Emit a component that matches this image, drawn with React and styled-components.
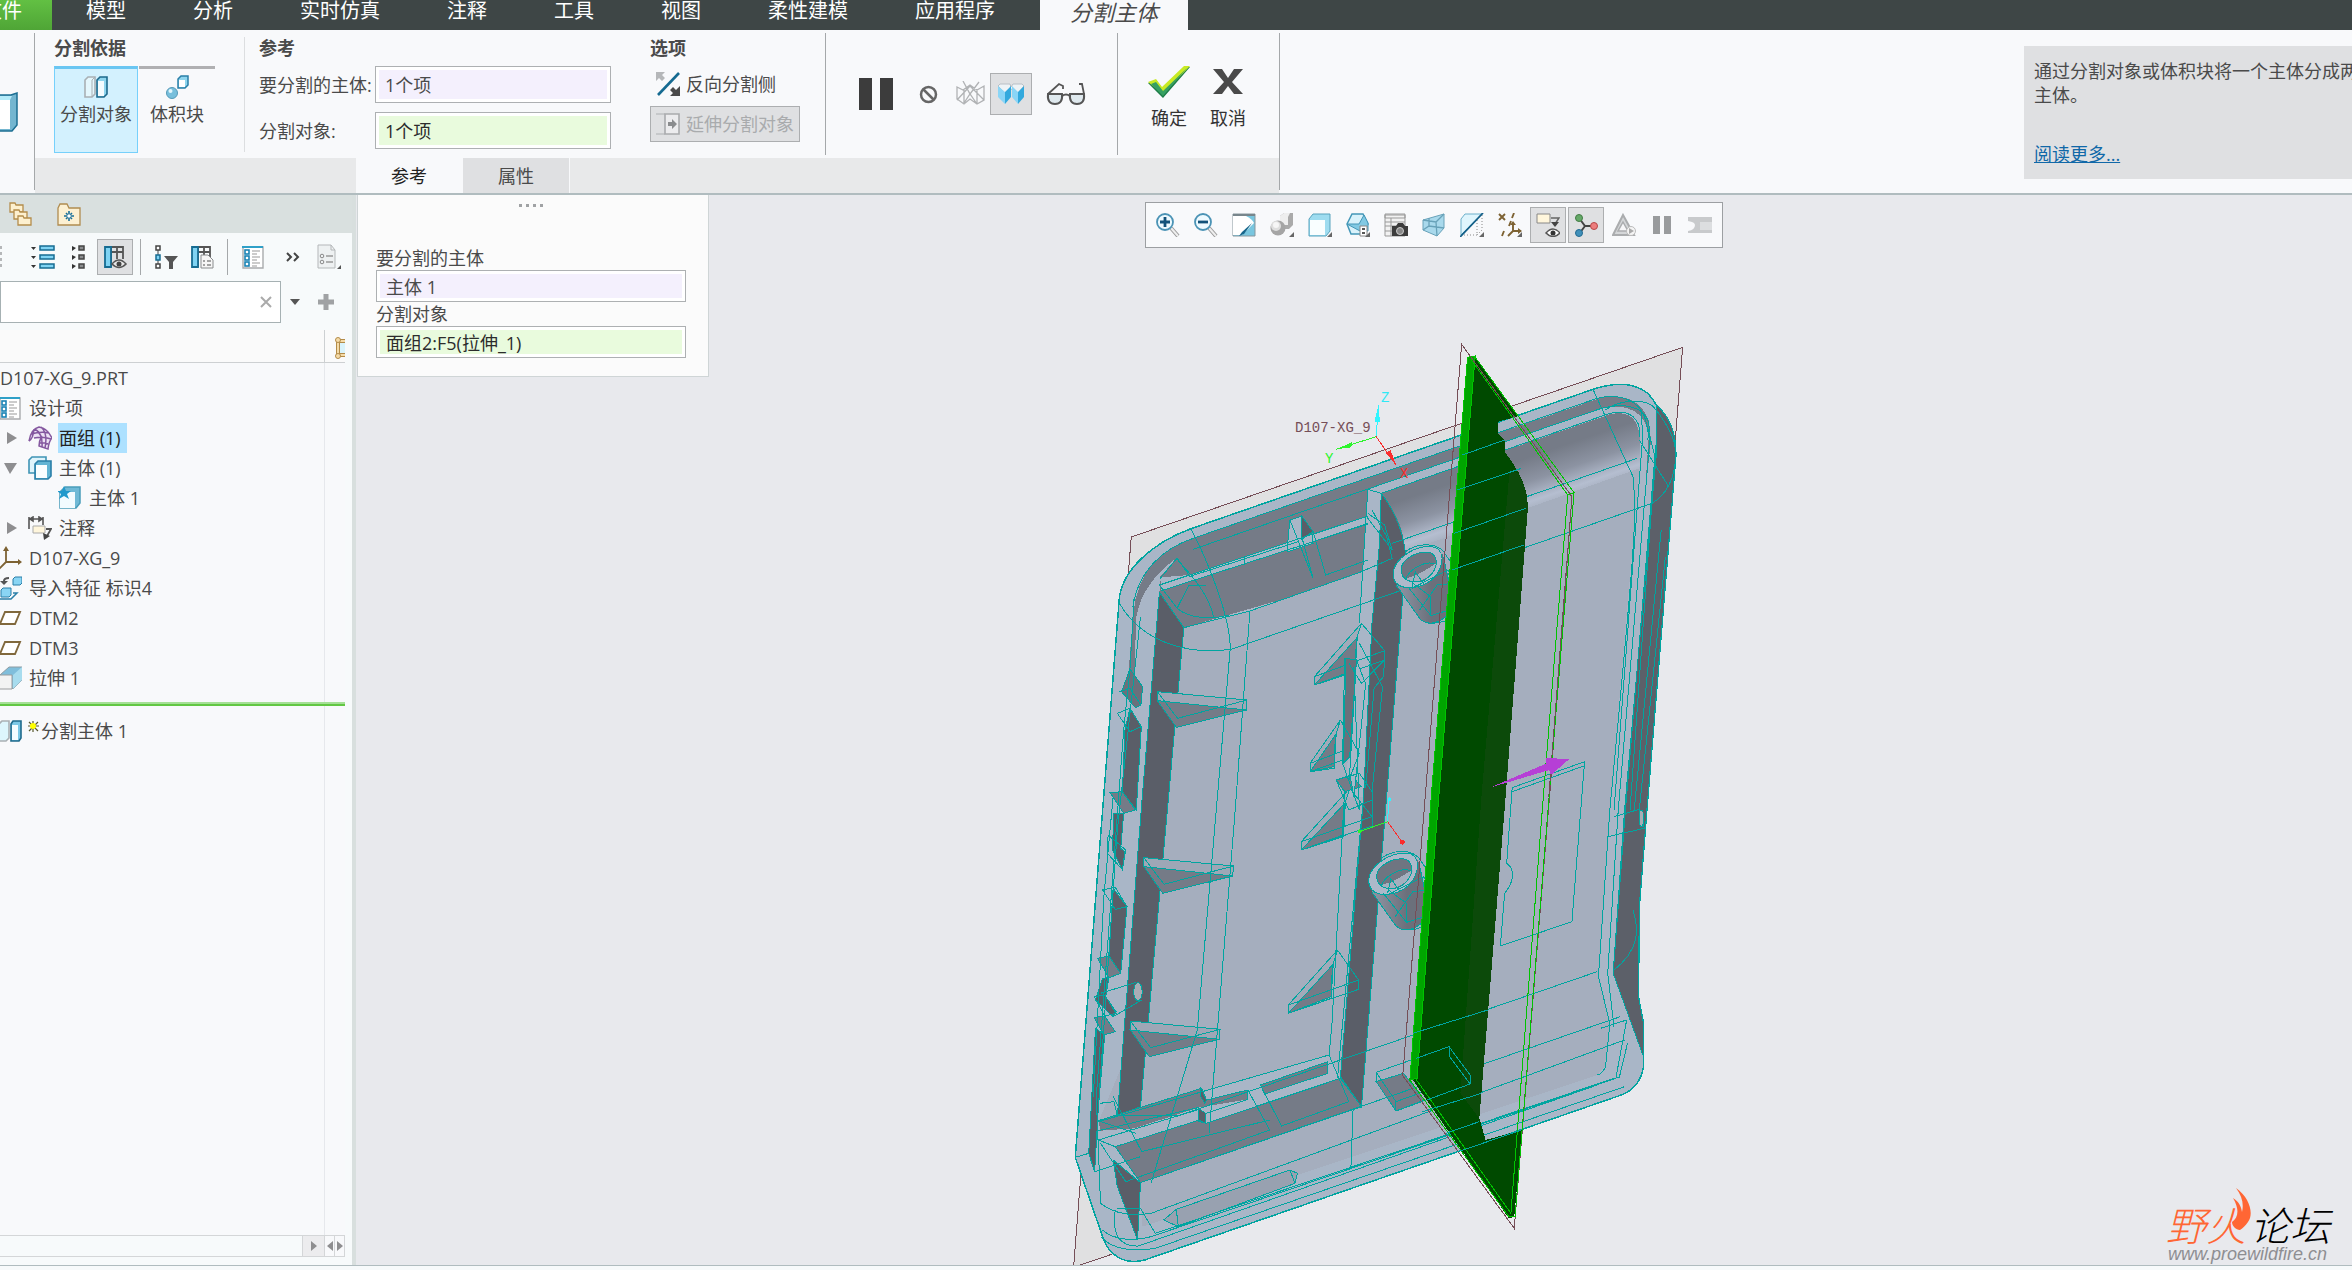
import React from 'react';
import styled, {createGlobalStyle, css} from 'styled-components';

const GlobalStyle = createGlobalStyle`
*
{
    margin: 0;
    padding: 0;
    box-sizing: border-box;
}

body
{
    font-family: 'Open Sans', 'Noto Sans CJK SC', sans-serif;
    font-size: 18px;
    line-height: 24px;
    color: #4a4a4a;
    background: #f8f9fb;
    overflow: hidden;
}

button, input
{
    font: inherit;
    color: inherit;
    border: none;
    background: none;
}

svg
{
    display: block;
    flex: none;
}
`;

const Page = styled.div`
	height: 100vh;
	display: flex;
	flex-direction: column;
`;

/* ---------- menu bar ---------- */

const MenuBar = styled.nav`
	flex: none;
	height: 30px;
	display: flex;
	gap: 1px;
	background: #3e4646;
	overflow: hidden;
`;

const MenuTab = styled.button`
	flex: none;
	height: 30px;
	padding: 0 33px 8px;
	font-size: 20px;
	line-height: 22px;
	color: #fff;
	white-space: nowrap;

	${({$file}) =>
		$file &&
		css`
			width: 52px;
			padding: 0 30px 8px 0;
			display: flex;
			justify-content: flex-end;
			background: linear-gradient(#62c043, #4fa536);
		`}

	${({$active}) =>
		$active &&
		css`
			margin-left: 11px;
			padding: 0 30px 6px;
			font-size: 22px;
			line-height: 24px;
			font-style: italic;
			color: #4a4a4a;
			background: #f8f9fb;
		`}
`;

/* ---------- ribbon ---------- */

const Ribbon = styled.header`
	flex: none;
	height: 165px;
	display: flex;
	background: #f8f9fb;
	border-bottom: 2px solid #b0bcbf;
`;

const RibbonStub = styled.div`
	width: 34px;
	padding-top: 62px;
	overflow: hidden;
`;

const Divider = styled.div`
	flex: none;
	width: 1px;
	margin: ${({$inset}) => $inset || '3px 0'};
	background: ${({$soft}) => ($soft ? '#dcdee0' : '#a5a8aa')};
`;

const Dashboard = styled.section`
	width: 1244px;
	flex: none;
	display: flex;
	flex-direction: column;
`;

const Groups = styled.div`
	height: 128px;
	display: flex;
`;

const Group = styled.div`
	padding: 6px ${({$right}) => $right}px 0 ${({$left}) => $left}px;
	display: flex;
	flex-direction: column;
	gap: 6px;
`;

const GroupTitle = styled.h2`
	font-size: 18px;
	line-height: 24px;
	font-weight: 700;
`;

const Choices = styled.div`
	display: flex;
	gap: 1px;
`;

const Choice = styled.button`
	width: ${({$on}) => ($on ? 84 : 76)}px;
	height: 87px;
	padding-top: 6px;
	display: flex;
	flex-direction: column;
	align-items: center;
	gap: 3px;
	white-space: nowrap;
	border-top: 3px solid #b0b0b2;

	${({$on}) =>
		$on &&
		css`
			border: 1px solid #76d0fb;
			border-top: 3px solid #6ac6f2;
			background: #d3f1fe;
		`}
`;

const Fields = styled.div`
	display: grid;
	grid-template-columns: 116px 236px;
	grid-auto-rows: 37px;
	row-gap: 9px;
	align-items: center;
`;

const Collector = styled.input`
	width: 100%;
	height: ${({$h}) => $h || 37}px;
	padding: 0 9px 1px;
	border: 1px solid #adb0b2;
	box-shadow: inset 0 0 0 3px #fff;
	background: ${({$green}) => ($green ? '#e9fbdd' : '#f4f0fd')};
	color: ${({$green}) => ($green ? '#2c2c2c' : '#4a4a4a')};
	outline: none;
`;

const OptionButton = styled.button`
	width: 150px;
	height: 36px;
	padding-left: 5px;
	display: flex;
	align-items: center;
	gap: 6px;
	white-space: nowrap;
	border: 1px solid transparent;

	&:disabled {
		color: #a9abad;
		background: #dfe0e2;
		border-color: #acaeb0;
	}
`;

const Options = styled.div`
	display: flex;
	flex-direction: column;
	gap: 4px;
`;

const Playback = styled.div`
	padding: 0 24px 0 27px;
	display: flex;
	align-items: center;
	gap: 7px;
`;

const PlayButton = styled.button`
	width: ${({$w}) => $w}px;
	height: 42px;
	display: flex;
	align-items: center;
	justify-content: center;
	border: 1px solid ${({$on}) => ($on ? '#acaeb0' : 'transparent')};
	background: ${({$on}) => ($on ? '#dfe0e2' : 'none')};
`;

const Finish = styled.div`
	padding: 36px 22px 0 23px;
	display: flex;
	gap: 3px;
`;

const FinishButton = styled.button`
	width: 56px;
	height: 64px;
	display: flex;
	flex-direction: column;
	align-items: center;
	justify-content: space-between;
	color: #333;
`;

const SubTabs = styled.div`
	height: 35px;
	padding-left: 321px;
	display: flex;
	background: #e8e9ea;
`;

const SubTab = styled.button`
	width: 107px;
	border-right: 1px solid #f8f9fb;
	background: ${({$on}) => ($on ? '#f8f9fb' : '#dfe0e2')};
	color: ${({$on}) => ($on ? '#222' : '#4a4a4a')};
`;

const Help = styled.aside`
	width: 328px;
	height: 133px;
	margin: 16px 0 0 auto;
	padding: 13px 0 0 10px;
	overflow: hidden;
	background: #dfe0e2;

	p {
		width: 350px;
		margin-bottom: 35px;
	}

	a {
		color: #1068a8;
	}
`;

/* ---------- model tree ---------- */

const Workspace = styled.main`
	flex: 1;
	min-height: 0;
	display: flex;
`;

const Sidebar = styled.aside`
	flex: none;
	width: 356px;
	display: flex;
	flex-direction: column;
	background: #f7fafb;
	border-right: 4px solid #d8dfde;
`;

const PaneTabs = styled.div`
	height: 38px;
	padding-left: 9px;
	display: flex;
	align-items: center;
	gap: 24px;
	background: #d9e0df;
`;

const PaneTab = styled.button`
	width: 24px;
	height: 24px;
`;

const TreeTools = styled.div`
	height: 48px;
	padding-right: 5px;
	display: flex;
	align-items: center;

	> ${Divider} {
		height: 36px;
	}

	> :nth-last-child(2) {
		margin-left: auto;
	}
`;

const ToolStub = styled.div`
	width: 25px;
`;

const ToolButton = styled.button`
	flex: none;
	width: 36px;
	height: 36px;
	display: flex;
	align-items: center;
	justify-content: center;
	border: 1px solid ${({$on}) => ($on ? '#acaeb0' : 'transparent')};
	background: ${({$on}) => ($on ? '#dfe0e2' : 'none')};
`;

const SearchRow = styled.div`
	height: 42px;
	margin-bottom: 7px;
	display: flex;
	align-items: center;
`;

const SearchBox = styled.div`
	width: 281px;
	height: 42px;
	display: flex;
	border: 1px solid #a6b1b3;
	background: #fff;

	input {
		flex: 1;
		min-width: 0;
		padding-left: 8px;
		outline: none;
	}
`;

const SmallButton = styled.button`
	width: ${({$w}) => $w}px;
	height: 40px;
	display: flex;
	align-items: center;
	justify-content: center;
`;

const ColumnHead = styled.div`
	width: 345px;
	height: 33px;
	display: flex;
	background: #fafafa;
	border-bottom: 1px solid #cdd0d2;

	div {
		width: 325px;
		border-right: 1px solid #cdd0d2;
	}

	svg {
		margin: 6px 0 0 10px;
	}
`;

const Tree = styled.div`
	flex: 1;
	width: 345px;
	background: #f8f9fb;
`;

const TreeList = styled.ul`
	width: 325px;
	height: 100%;
	list-style: none;
	border-right: 1px solid #e6e8ec;
`;

const TreeRow = styled.li`
	height: 30px;
	padding-left: ${({$indent}) => $indent || 0}px;
	display: flex;
	align-items: center;
	white-space: nowrap;
`;

const Toggle = styled.button`
	width: 28px;
	height: 30px;
	padding-left: 4px;
`;

const TreeLabel = styled.span`
	height: 30px;
	line-height: 30px;
	margin-left: ${({$tight}) => ($tight ? 1 : 6)}px;
	padding: 0 6px 0 1px;
	background: ${({$selected}) => ($selected ? '#ade1ff' : 'none')};
	color: ${({$selected}) => ($selected ? '#222' : 'inherit')};
`;

const InsertHere = styled.li`
	width: 345px;
	height: 4px;
	margin: 9px 0 10px;
	background: #62c743;
	border-top: 2px solid #a5e096;
`;

const ScrollBar = styled.div`
	width: 345px;
	height: 22px;
	margin-bottom: 8px;
	display: flex;
	justify-content: flex-end;
	border: 1px solid #d4d6d8;
	border-left: none;
`;

const ScrollButton = styled.button`
	width: ${({$w}) => $w}px;
	display: flex;
	align-items: center;
	justify-content: center;
	border-left: 1px solid #d4d6d8;
	background: ${({$w}) => ($w > 12 ? '#ececee' : '#f8f9fb')};
`;

/* ---------- graphics area ---------- */

const Viewport = styled.section`
	position: relative;
	flex: 1;
	overflow: hidden;
	background: #e8e9ed;
`;

const Scene = styled.svg`
	position: absolute;
	inset: 0;
	width: 100%;
	height: 100%;

	path,
	ellipse {
		vector-effect: non-scaling-stroke;
	}

	text {
		font: 14px 'Liberation Mono', monospace;
	}
`;

const FloatPanel = styled.section`
	position: absolute;
	left: 1px;
	top: -1px;
	width: 352px;
	padding: 9px 22px 18px 18px;
	background: #fbfbfb;
	border: 1px solid #cfd5d6;
`;

const Grip = styled.div`
	height: 42px;
	display: flex;
	justify-content: center;
	gap: 4px;

	i {
		width: 3px;
		height: 3px;
		background: #a0a2a4;
	}
`;

const FieldLabel = styled.label`
	display: block;
	height: 24px;
`;

const ViewTools = styled.div`
	position: absolute;
	left: 789px;
	top: 7px;
	height: 46px;
	padding: 0 4px;
	display: flex;
	align-items: center;
	gap: 2px;
	border: 1px solid #9c9fa2;
	background: #f8f9fb;
`;

const Brand = styled.div`
	position: absolute;
	right: 16px;
	bottom: 3px;
	width: 170px;
	color: #000;

	p {
		display: flex;
		gap: 4px;
		font: italic 300 40px/44px 'Noto Sans CJK SC', sans-serif;
		white-space: nowrap;
	}

	span {
		color: #ff6634;
	}

	small {
		display: block;
		padding-left: 2px;
		font: italic 18px/16px 'Liberation Sans', sans-serif;
		color: #8e8e92;
	}

	svg {
		position: absolute;
		left: 65px;
		top: -14px;
	}
`;

const StatusLine = styled.footer`
	flex: none;
	height: 5px;
	border-top: 1px solid #b0bcbf;
	background: #f7fafb;
`;

/* ---------- icons ---------- */

const blue = '#2a7fa8';

function Icon({w = 24, h = 24, box, children}) {
	return (
		<svg width={w} height={h} viewBox={box || `0 0 ${w} ${h}`} fill='none' aria-hidden='true'>
			{children}
		</svg>
	);
}

const Corner = () => <path d='M24 19v5h-5z' fill='#666' />;

const SplitIcon = () => (
	<Icon>
		<path d='M1 5l3-3h7v17l-3 3H1z' fill='#e4f7fd' stroke='#a9b0b4' strokeWidth='1.6' />
		<path d='M8 22V5l3-3' stroke='#a9b0b4' />
		<path d='M13 5l3-3h7v17l-3 3h-7z' fill='#8fd5ee' stroke='#1e6a8c' strokeWidth='1.6' />
		<path d='M14 6h6v15h-6z' fill='#f4fcff' />
	</Icon>
);

const VolumeIcon = () => (
	<Icon>
		<path d='M13 4l3-3h7v9l-3 3h-7z' fill='#8fd5ee' stroke={blue} strokeWidth='1.5' />
		<path d='M14 5h6v7h-6z' fill='#fff' />
		<circle cx='7' cy='18' r='5.5' fill='#78bfdc' stroke='#559ab8' />
		<circle cx='5.5' cy='16' r='2' fill='#e2f6fd' />
	</Icon>
);

const FlipIcon = () => (
	<Icon>
		<path d='M23 1L2 23' stroke='#156a91' strokeWidth='2.6' />
		<path d='M0 0h9L6 3l3 3-3 3-3-3-3 3z' fill='#b5b7b9' />
		<path d='M24 24H14l3-3-3-3 3-3 3 3 4-4z' fill='#4a4a4a' />
	</Icon>
);

const ExtendIcon = () => (
	<Icon>
		<path d='M0 2h9M0 22h9' stroke='#c6c8ca' strokeWidth='2' />
		<path d='M9 2h14v20H9z' fill='#ececee' stroke='#a9abad' strokeWidth='1.6' />
		<path d='M12 10h4V7l5 5-5 5v-3h-4z' fill='#8a8c8e' />
	</Icon>
);

const WireIcon = () => (
	<Icon w={29} h={26}>
		<path
			d='M1 6l6 3 7-5 7 5 7-4v14l-7 4-7-5-6 5-7-5zM8 9v13M21 9v14M1 19L14 5l14 14M7 0l7 13L23 1M8 22l6-9 7 10'
			stroke='#b0b2b4'
			strokeWidth='1.3'
		/>
	</Icon>
);

const SolidIcon = () => (
	<Icon w={28} h={22}>
		<path d='M1 3l2-2h10l1 3 2-3h9l2 2-6 7-7-4-6 4z' fill='#eef3f6' stroke='#b9c0c6' />
		<path d='M1 3l7 6v12l-7-7zM15 3l6 6v12l-6-7z' fill='#8ad5f6' />
		<path d='M8 9l6-6v11l-6 7zM21 9l6-6v11l-6 7z' fill='#33a9dd' />
	</Icon>
);

const GlassesIcon = () => (
	<Icon w={40} h={24}>
		<path d='M2 12h14q1 10-7 10-8 0-7-10zM24 12h14q1 10-7 10-8 0-7-10z' fill='#dfe9ee' stroke='#555' strokeWidth='2' />
		<path d='M16 14q4-3 8 0M2 12L13 2l4 2v3M38 12L36 2h-3' stroke='#555' strokeWidth='1.8' />
	</Icon>
);

const CheckIcon = () => (
	<Icon w={42} h={32}>
		<path d='M0 17l8-3 6 8L37 1h5L15 32z' fill='#1d7d48' />
		<path d='M0 16l8-3 6 8L36 0h6L15 28z' fill='#c8ea24' />
		<path d='M3 18l5-2 7 9L39 2 15 30z' fill='#36a062' />
	</Icon>
);

const CrossIcon = () => (
	<Icon w={30} h={32}>
		<path d='M0 3h9l6 9 6-9h9L19 16l11 12h-9l-6-8-6 8H0l11-12z' fill='#4a4a4a' />
	</Icon>
);

const FoldersIcon = () => (
	<Icon>
		{[0, 7, 13].map((y, i) => (
			<path
				key={y}
				d={`M${i * 4 + 1} ${y + 1}h5l1 2h7v7h-13z`}
				fill='#fdf0cf'
				stroke='#b48d4c'
				strokeWidth='1.3'
			/>
		))}
	</Icon>
);

const FavoriteIcon = () => (
	<Icon>
		<path d='M1 6l2-4h7l2 4h11v17H1z' fill='#fcf0d2' stroke='#b08c50' strokeWidth='1.3' />
		<path d='M12 9v10M7 14h10M9 11l6 6M15 11l-6 6' stroke='#1a6f99' strokeWidth='1.6' />
		<circle cx='12' cy='14' r='1.8' fill='#fff' />
	</Icon>
);

const ExpandIcon = () => (
	<Icon>
		{[1, 10, 19].map((y) => (
			<React.Fragment key={y}>
				<path d={`M0 ${y + 1}h5l-2.500 3z`} fill='#333' />
				<path d={`M9 ${y}h14v4H9z`} fill='#7fd3f3' stroke='#176c92' strokeWidth='1.5' />
			</React.Fragment>
		))}
	</Icon>
);

const CollapseIcon = () => (
	<Icon>
		{[1, 10, 19].map((y) => (
			<React.Fragment key={y}>
				<path d={`M5 ${y}l4 2-4 3z`} fill='#333' />
				<path d={`M12 ${y}h5v4h-5z`} fill='#8b8d8f' stroke='#444' strokeWidth='1.5' />
			</React.Fragment>
		))}
	</Icon>
);

const ColumnsIcon = ({page}) => (
	<Icon>
		<path d='M2 2h18v12M2 7h18M8 2v20M14 2v12' stroke='#555' strokeWidth='1.8' />
		<path d='M2 2h6v20H2z' fill='#7fd3f3' stroke='#176c92' strokeWidth='1.8' />
		{page ? (
			<>
				<path d='M11 10h7l5 5v8H11z' fill='#f6f6f6' stroke='#8a8c8e' />
				<path d='M13 16h2m2 0h4m-8 4h2m2 0h4' stroke='#888' strokeWidth='1.5' />
			</>
		) : (
			<>
				<path d='M9 19q7-8 14 0-7 7-14 0z' fill='#e8e8e8' stroke='#555' strokeWidth='1.6' />
				<circle cx='16' cy='19' r='2.5' fill='#444' />
			</>
		)}
	</Icon>
);

const FilterIcon = () => (
	<Icon>
		<path d='M4 4v17' stroke='#444' />
		<path d='M2 1h4v4H2zM2 19h4v4H2z' fill='#fff' stroke='#444' strokeWidth='1.5' />
		<path d='M2 10h4v5H2z' fill='#7fd3f3' stroke='#176c92' strokeWidth='1.5' />
		<path d='M10 11h14l-5 6v7h-4v-7z' fill='#555' />
	</Icon>
);

const ListIcon = () => (
	<Icon>
		<path d='M2 2h20v21H2z' fill='#fff' stroke='#a9abad' strokeWidth='1.4' />
		<path d='M1 1h21v2H1z' fill='#2fa0c8' />
		{[6, 12, 18].map((y) => (
			<React.Fragment key={y}>
				<rect x='4' y={y - 1} width='4' height='4' stroke='#1a83b4' strokeWidth='1.6' />
				<path d={`M11 ${y}h8M11 ${y + 3}h5`} stroke='#999' />
			</React.Fragment>
		))}
	</Icon>
);

const SettingsIcon = () => (
	<Icon w={26} h={26}>
		<path d='M2 1h13l4 5v18H2z' fill='#eef1f2' stroke='#b4b7b9' />
		<path d='M15 1v5h4' stroke='#b4b7b9' />
		<path d='M10 12h7M10 18h7' stroke='#999' strokeWidth='1.5' />
		<circle cx='6' cy='12' r='1.8' stroke='#888' />
		<circle cx='6' cy='18' r='1.8' stroke='#888' />
		<path d='M25 21v4h-4z' fill='#555' />
	</Icon>
);

const DotsIcon = () => (
	<Icon w={3}>
		<path d='M0 1h2v3H0zM0 7h2v3H0zM0 13h2v3H0zM0 19h2v3H0z' fill='#b5b7b9' />
	</Icon>
);

const QuiltIcon = () => (
	<Icon>
		<path d='M1 15Q3 3 11 1l9 3q3 4 4 8l-5 11-8-2 1-7-6-3z' fill='#ece2f4' />
		<path
			d='M1 15Q3 3 11 1q8 1 13 11-3 3-4 11l-9-3q0-5 3-10M3 8q10-3 18-1M6 12q9-2 17 1M11 17q5-1 9 1M7 3q8 5 7 18M13 1q7 6 4 21M1 15q4-2 5-12'
			stroke='#84589f'
			strokeWidth='1.5'
		/>
	</Icon>
);

const BodiesIcon = () => (
	<Icon>
		<path d='M1 4l3-3h14v13l-3 3H1z' fill='#dff4fb' stroke='#3f94b5' strokeWidth='1.6' />
		<path d='M7 8l3-3h13v15l-3 3H7z' fill='#62b4d3' stroke={blue} strokeWidth='1.6' />
		<path d='M8 9h11v13H8z' fill='#fafeff' />
	</Icon>
);

const BodyIcon = () => (
	<Icon>
		<path d='M2 6l5-5h15v16l-4 5H2z' fill='#6fb9d6' stroke='#4a9dbb' strokeWidth='1.5' />
		<path d='M2 6h15v16H2z' fill='#f2fbff' />
		<path d='M6 0l2 5h5L9 8l2 5-5-3-5 3 2-5-4-3h5z' fill='#2199cc' />
	</Icon>
);

const NoteIcon = () => (
	<Icon>
		<path d='M1 13V1M15 9V1M2 3h12M2 3l3-2v4zM14 3l-3-2v4z' stroke='#555' strokeWidth='1.6' />
		<path d='M5 10h12v7H5z' fill='#fff6dc' stroke='#aaa' />
		<path d='M18 13h5l-4 7' stroke='#555' strokeWidth='1.8' />
		<path d='M15 17l7 3-6 4z' fill='#444' />
	</Icon>
);

const CsysIcon = () => (
	<Icon w={22}>
		<path d='M6 2v14h14M6 16l-7 7' stroke='#7d6233' strokeWidth='1.8' />
		<path d='M3 5l3-5 3 5zM18 13l4 3-4 3z' fill='#7d6233' />
	</Icon>
);

const ImportIcon = () => (
	<Icon w={22}>
		<path d='M13 3l2-2h7v6l-2 2h-7z' fill='#8ad5f4' stroke={blue} />
		<path d='M1 14l2-2h8v7l-2 2H1z' fill='#8ad5f4' stroke={blue} />
		<path d='M0 23h11l6-6h-4' stroke={blue} strokeWidth='1.5' />
		<path d='M9 1q-6 0-6 4H0l4 4 4-4H5q0-2 4-2z' fill='#555' />
	</Icon>
);

const PlaneIcon = () => (
	<Icon w={22}>
		<path d='M5 6h15l-5 12H0z' fill='#fff' stroke='#80683c' strokeWidth='1.9' />
	</Icon>
);

const ExtrudeIcon = () => (
	<Icon w={22}>
		<path d='M0 9L9 1h13v13l-9 9z' fill='#80bedb' stroke='#8e9ba2' />
		<path d='M13 9l9-8v13l-9 9z' fill='#a8dcee' />
		<path d='M-1 9h13v14H-1z' fill='#f3f3f3' stroke='#9a9c9e' />
	</Icon>
);

const HalfSplitIcon = () => (
	<Icon w={22}>
		<path d='M-1 5l3-3h7v17l-3 3h-7z' fill='#ddf6fd' stroke='#a9b0b4' strokeWidth='1.6' />
		<path d='M11 5l2-3h8v17l-2 3h-8z' fill='#7cc8e6' stroke='#1e6a8c' strokeWidth='1.6' />
		<path d='M12 6h6v15h-6z' fill='#f4fcff' />
	</Icon>
);

const PendingIcon = () => (
	<Icon w={11} h={24}>
		<path d='M5 2v11M0 7h11M1 3l9 9M10 3l-9 9' stroke='#57572c' strokeWidth='1.2' />
		<circle cx='5' cy='7' r='3' fill='#ff0' />
	</Icon>
);

const FrameIcon = () => (
	<Icon w={10}>
		<path d='M5 7h5v10H5z' fill='#d9f3fb' />
		<path d='M3 4v16M3 5h8M3 19h8' stroke='#b38b48' strokeWidth='4' />
		<path d='M3 4v16M3 5h8M3 19h8' stroke='#f5dba8' strokeWidth='2' />
		<circle cx='3' cy='4' r='2.5' fill='#f5dba8' stroke='#b38b48' />
		<circle cx='3' cy='20' r='2.5' fill='#f5dba8' stroke='#b38b48' />
	</Icon>
);

const Triangle = ({d, w = 14, h = 14}) => (
	<Icon w={w} h={h}>
		<path d={d} fill='#8e8e90' />
	</Icon>
);

const ZoomIcon = ({plus}) => (
	<Icon>
		<path d='M15 15l7 8' stroke='#999' strokeWidth='4' />
		<path d='M15 15l7 8' stroke='#eee' strokeWidth='2' />
		<circle cx='9' cy='9' r='8' fill='#eefaff' stroke='#4b93b5' strokeWidth='1.8' />
		<path d={plus ? 'M4 9h10M9 4v10' : 'M4 9h10'} stroke='#12527a' strokeWidth='2.8' />
	</Icon>
);

const viewIcons = [
	{name: '放大', icon: <ZoomIcon plus />},
	{name: '缩小', icon: <ZoomIcon />},
	{
		name: '重画',
		icon: (
			<Icon>
				<path d='M1 1h22v22H1z' fill='#79c6df' stroke='#88979d' />
				<path d='M1 3h13q6 3 8 7L10 22H1z' fill='#fff' />
				<path d='M1 1h22v2H1z' fill='#78868c' />
				<path d='M20 10L10 19l-3 4 5-2z' fill='#17668c' />
			</Icon>
		),
	},
	{
		name: '渲染',
		icon: (
			<Icon>
				<path d='M10 3l4-3h9v12l-4 4h-9z' fill='#aaa' />
				<path d='M10 3l4-3h6l-2 4v8h-8z' fill='#eee' />
				<circle cx='8' cy='15' r='7.5' fill='#a5a5a5' />
				<circle cx='6' cy='13' r='5' fill='#dedede' />
				<circle cx='6' cy='12' r='3' fill='#f6f6f6' />
				<Corner />
			</Icon>
		),
	},
	{
		name: '显示样式',
		icon: (
			<Icon>
				<path d='M1 6l4-5h17v17l-4 5H1z' fill='#9edcf0' stroke='#58a3bd' />
				<path d='M2 7h15v15H2z' fill='#f9feff' />
				<Corner />
			</Icon>
		),
	},
	{
		name: '已保存方向',
		icon: (
			<Icon>
				<path d='M6 1h11l5 10-5 10H5L1 11z' fill='#d9f2fb' stroke='#4497b8' strokeWidth='1.5' />
				<path d='M1 11h12l5-9 4 8v8h-8z' fill='#82c9e3' stroke='#4497b8' />
				<path d='M14 13h7v10h-7z' fill='#fff' stroke='#888' />
				<path d='M16 16h3m-3 4h3' stroke='#555' strokeWidth='2' />
				<Corner />
			</Icon>
		),
	},
	{
		name: '视图管理器',
		icon: (
			<Icon>
				<path d='M1 1h20v22H1z' fill='#f2f2f2' stroke='#999' />
				<path d='M1 2h20v3H1zM1 9h20M1 13h20M1 18h20M7 5v18' stroke='#999' />
				<path d='M8 13h4l2-3h5l2 3h3v10H8z' fill='#3c3c3c' />
				<circle cx='16' cy='18' r='3.5' fill='#888' stroke='#ccc' />
			</Icon>
		),
	},
	{
		name: '透视图',
		icon: (
			<Icon>
				<path d='M1 7L22 1v14l-7 8L1 17z' fill='#a9d9ec' stroke='#68a2b9' />
				<path d='M1 7l13 2 8-8M14 9l1 14M1 17l6-4 15 2M7 5v8' stroke='#68a2b9' strokeWidth='1.3' />
			</Icon>
		),
	},
	{
		name: '截面',
		icon: (
			<Icon>
				<path d='M1 6l4-5h17L1 22z' fill='#dff5fd' stroke='#6cb0cb' />
				<path d='M17 7v15H3M22 2v15l-5 5' stroke='#888' strokeDasharray='1 2' />
				<path d='M23 0L0 24' stroke='#125f88' strokeWidth='1.8' />
				<Corner />
			</Icon>
		),
	},
	{
		name: '基准显示',
		icon: (
			<Icon>
				<path d='M1 1l6 6M7 1L1 7M16 0l-2 5M13 8l-2 5M6 18l-2 5M15 10v8h8M15 18l-5 5' stroke='#7d6233' strokeWidth='1.9' />
				<path d='M12 12l3-4 3 4zM20 15l4 3-4 3z' fill='#7d6233' />
				<Corner />
			</Icon>
		),
	},
	{
		name: '注释显示',
		on: true,
		icon: (
			<Icon>
				<path d='M1 1h13v9H1z' fill='#fff6dc' stroke='#888' />
				<path d='M15 5h8l-4 6' stroke='#666' strokeWidth='1.5' />
				<path d='M15 9h8l-4 5z' fill='#444' />
				<path d='M10 20q7-8 14 0-7 7-14 0z' fill='#fff' stroke='#555' strokeWidth='1.5' />
				<circle cx='17' cy='20' r='2.5' fill='#333' />
			</Icon>
		),
	},
	{
		name: '旋转中心',
		on: true,
		icon: (
			<Icon>
				<path d='M5 5l6 8h9M11 13l-6 8' stroke='#444' strokeWidth='2' />
				<circle cx='5' cy='5' r='3.5' fill='#65a968' stroke='#427b44' />
				<circle cx='20' cy='13' r='3.5' fill='#ed7d7d' stroke='#b54747' />
				<circle cx='5' cy='20' r='3.5' fill='#4090ba' stroke='#226a90' />
			</Icon>
		),
	},
	{
		name: '仿真',
		icon: (
			<Icon>
				<path d='M11 2l11 20H1z' fill='#d4d6d8' stroke='#aaacae' strokeWidth='2' />
				<path d='M11 9l5 9H6z' fill='#f6f6f8' stroke='#aaacae' strokeWidth='1.5' />
				<circle cx='19' cy='18' r='4.5' fill='#f4f4f4' stroke='#bbb' />
				<path d='M17 15l5 3-5 3z' fill='#aaa' />
			</Icon>
		),
	},
	{
		name: '暂停',
		icon: (
			<Icon>
				<path d='M3 3h7v18H3zM14 3h7v18h-7z' fill='#999b9d' />
			</Icon>
		),
	},
	{
		name: '流动',
		icon: (
			<Icon>
				<path d='M0 4h24v16H0v-2q7-1 7-6 0-3-7-4z' fill='#c8cacc' />
				<path d='M12 9h12v8H12z' fill='#dcdee0' />
			</Icon>
		),
	},
];

/* ---------- 3D model ---------- */

const leftRibs = [
	[0, 0],
	[-32, 498],
	[-64, 988],
];

const rightRibs = [
	{apex: [740, 880], tip: [628, 1040], base: [795, 962]},
	{apex: [690, 1170], tip: [618, 1300], base: [733, 1245]},
	{apex: [712, 1375], tip: [597, 1535], base: [765, 1460]},
	{apex: [683, 1860], tip: [566, 2025], base: [733, 1950]},
];

function Boss() {
	return (
		<>
			<path d='M822 765L880 868C905 895 950 870 962 815L932 670Z' fill='url(#boss)' />
			<path d='M815 730C818 685 870 640 915 652C945 670 930 735 895 760C860 782 815 780 815 730Z' fill='#adb9ca' />
			<path d='M834 720C834 690 870 660 905 668C930 690 915 730 890 750C860 765 835 750 834 720Z' fill='#6f7581' />
			<path d='M845 745C870 740 900 715 920 698C920 725 895 750 865 757C852 757 846 752 845 745Z' fill='#a5afbe' />
			<path
				d='M822 765L880 868C905 895 950 870 962 815M815 730C818 685 870 640 915 652C945 670 930 735 895 760C860 782 815 780 815 730ZM834 720C834 690 870 660 905 668C930 690 915 730 890 750C860 765 835 750 834 720ZM845 750C850 720 890 690 915 702M850 770L905 857L960 835L935 680M860 775L945 720L992 785C992 830 960 880 905 880M860 770L868 726L890 765M878 840L920 765L960 760M905 857L905 800L862 760M845 665C870 640 915 635 935 665L965 720'
				fill='none'
				stroke='#00a5a0'
			/>
		</>
	);
}

function Model() {
	return (
		<svg x='694' y='135' width='660' height='940' viewBox='0 0 1568 2820' preserveAspectRatio='none' shapeRendering='crispEdges'>
			<defs>
				<linearGradient id='fillet' gradientUnits='userSpaceOnUse' x1='787' y1='490' x2='862' y2='665'>
					<stop offset='0.2' stopColor='#757b87' />
					<stop offset='0.55' stopColor='#8c93a2' />
					<stop offset='0.85' stopColor='#b5bed0' />
					<stop offset='1' stopColor='#a5aebe' />
				</linearGradient>
				<linearGradient id='boss' x1='0' x2='1'>
					<stop offset='0.1' stopColor='#8a909e' />
					<stop offset='0.6' stopColor='#6b707b' />
				</linearGradient>
			</defs>

			{/* datum plane behind the housing */}
			<path d='M193 621L1503 52L1365 2245L56 2812Z' fill='#e0e0e1' stroke='#754e57' />

			{/* outer shell */}
			<path
				d='M165 800C175 720 240 640 335 596L1290 178C1370 145 1420 170 1440 225C1480 270 1486 320 1487 375L1418 1440L1400 1730L1398 2000L1410 2080L1410 2210C1405 2250 1390 2280 1355 2296L225 2790C180 2805 140 2780 125 2720L60 2482Z'
				fill='#a9b6c7'
				stroke='#00a5a0'
				strokeWidth='1.5'
			/>
			<path d='M1440 225C1480 270 1486 320 1487 375L1418 1440L1400 1730L1398 2000L1410 2080L1410 2180L1338 1930L1365 1440L1440 380Z' fill='#5c6069' stroke='#00a5a0' />

			{/* cavity: upper wall, then floors */}
			<path d='M197 860C205 720 270 655 340 625L1310 203C1370 190 1405 215 1422 270L1428 330L1395 700L845 690L740 740L318 893L260 787L262 740L300 685C250 730 215 790 205 860L200 1050L187 1020Z' fill='#757b87' />
			<path d='M262 745L302 684L330 735L755 558L755 582L265 782Z' fill='#a9b6c7' />
			<path d='M264 742L302 684L330 735Z' fill='#757b87' />
			<path d='M755 478L1310 235C1370 215 1425 250 1422 330L1360 1500L1330 1440L1398 320C1395 240 1340 245 1310 262L787 490Z' fill='#a9b6c7' />
			<path d='M787 490L1330 253C1395 235 1410 290 1400 420L845 690C845 600 820 540 787 490Z' fill='url(#fillet)' />
			<path d='M845 665L1400 415L1330 1440L1303 1930L1330 2080L1318 2210L1300 2235L220 2690L210 2560L740 2330Z' fill='#a5aebe' />
			<path d='M318 893L475 843L745 725L735 880L700 1000L745 1400L690 2240L663 2175L115 2375L240 2000Z' fill='#a5aebe' />

			{/* left walls */}
			<g stroke='#00a5a0'>
				<path d='M260 787L318 893L215 2330L160 2360L218 1420Z' fill='#5a5e68' />
				<path d='M190 1017L220 1070L216 1125L203 1133L170 1085Z' fill='#6b707b' />
				<path d='M190 1135L217 1190L205 1440L172 1385L178 1200Z' fill='#5a5e68' />
				<path d='M143 1388L172 1385L203 1440L175 1450Z' fill='#757b87' />
				<path d='M152 1450L175 1450L168 1555L178 1565L172 1618L148 1560Z' fill='#5a5e68' />
				<path d='M150 1675L183 1730L168 1930L140 1880Z' fill='#5a5e68' />
				<path d='M113 1885L140 1878L168 1930L140 1943Z' fill='#757b87' />
				<path d='M125 1945L140 1943L132 2000L157 2045L150 2060L108 2010Z' fill='#5a5e68' />
				<path d='M105 2062L130 2058L155 2105L128 2115Z' fill='#757b87' />
				<path d='M108 2095L130 2115L115 2330L106 2525L92 2470Z' fill='#5a5e68' />
				<ellipse cx='209' cy='1985' rx='10' ry='27' fill='#a9adb5' />
			</g>

			{/* centre wall */}
			<path d='M755 478L787 490L783 640L765 880L745 1400L700 1400L735 880Z' fill='#a9b6c7' />
			<path d='M787 490C830 560 845 640 845 690L835 850L740 2330L690 2240L745 1400L765 880L783 640Z' fill='#5a5e68' stroke='#00a5a0' />
			<path d='M570 570L598 558L598 620L622 610L625 640L565 665V635Z' fill='#a9b6c7' stroke='#00a5a0' />
			<path d='M598 558L625 605L598 628Z' fill='#5a5e68' stroke='#00a5a0' />

			{/* lower wall */}
			<path d='M115 2372L360 2275L372 2310L470 2280L470 2308L355 2332L200 2395L120 2402Z' fill='#757b87' />
			<path d='M500 2265L660 2195L660 2230L510 2292Z' fill='#757b87' />
			<path d='M155 2450L350 2372L370 2380L690 2245L740 2330L215 2558Z' fill='#757b87' stroke='#00a5a0' />
			<path d='M150 2490L215 2558L208 2730L160 2570Z' fill='#5a5e68' stroke='#00a5a0' />
			<path d='M358 2272L372 2310L368 2320L358 2300ZM352 2335L370 2350V2380L352 2370Z' fill='#5a5e68' stroke='#00a5a0' />
			<path d='M270 2670L300 2638L570 2520L588 2530L582 2560L305 2690Z' fill='#98a1b0' stroke='#00a5a0' />
			<path d='M775 2255L840 2230L890 2310L822 2343Z' fill='#757b87' stroke='#00a5a0' />

			{/* ribs */}
			{leftRibs.map(([dx, dy]) => (
				<g key={dy} transform={`translate(${dx} ${dy})`} stroke='#00a5a0'>
					<path d='M255 1085L468 1110L466 1140L255 1112Z' fill='#9ea7b6' />
					<path d='M255 1112L466 1140L300 1192Z' fill='#757b87' />
					<path d='M255 1085L303 1165L468 1110' fill='none' />
				</g>
			))}
			{rightRibs.map(({apex, tip, base}) => (
				<g key={apex[1]} stroke='#00a5a0'>
					<path
						d={`M${apex}L${tip}L${tip[0]} ${tip[1] + 25}L${apex[0] - 15} ${apex[1] + 145}L${apex[0] - 10} ${apex[1] + 40}Z`}
						fill='#a1aab9'
					/>
					<path d={`M${apex[0] - 12} ${apex[1] + 45}L${tip[0]} ${tip[1] + 25}L${apex[0] - 15} ${apex[1] + 140}Z`} fill='#757b87' />
					<path d={`M${apex}L${base}L${tip}M${tip[0]} ${tip[1] + 25}L${base[0]} ${base[1] + 28}V${base[1]}`} fill='none' />
				</g>
			))}

			{/* clips between the ribs */}
			<g stroke='#00a5a0'>
				<path d='M703 985L728 990L712 1280L697 1300Z' fill='#6b707b' />
				<path d='M680 1350L715 1335L740 1370L700 1385Z' fill='#757b87' />
				<path d='M728 990L750 1062L722 1400L712 1330Z' fill='#a9b6c7' />
			</g>

			{/* feature edges */}
			<g fill='none' stroke='#00a5a0'>
				<path d='M197 830C210 720 270 655 340 625L1300 205C1350 190 1400 205 1415 270L1437 380L1367 1440L1338 1930L1410 2180' />
				<path d='M165 820C220 940 330 975 430 958L1180 630L1430 520C1470 490 1485 440 1487 375' />
				<path d='M302 835C330 865 380 870 425 855M318 893L475 843L740 725M813 640L1395 385' />
				<path d='M340 658L1310 235C1370 215 1440 230 1420 330M787 490L1330 250C1380 235 1405 270 1400 320' />
				<path d='M1290 178L1385 440C1395 560 1390 640 1330 1440L1303 1940L1330 2080L1320 2210C1315 2225 1305 2235 1300 2235' />
				<path d='M1320 240C1350 210 1420 200 1440 240C1470 290 1487 330 1487 375M1415 270L1425 330L1350 1440L1325 1930L1340 2090' />
				<path d='M1440 225V340L1378 1440M1405 250L1408 320L1340 1440M1400 330L1470 470M1452 600L1388 1440M1462 680L1400 1440' />
				<path d='M215 860L160 1500L115 2330M190 1017L175 1200L110 2300L120 2620M150 1400L128 1700L103 2300' />
				<path d='M200 800L190 1017M165 1085L190 1075L216 1125M160 1150L190 1135L217 1190L190 1205Z' />
				<path d='M335 596C370 680 430 860 428 958L395 1440L350 2100L240 2560M475 843L440 1440L378 2410M300 685C340 740 380 800 388 860' />
				<path d='M262 745L302 684L330 735M260 765L755 558M265 782L755 582M260 765L302 835L330 765H370M625 635L755 580M330 740L590 635' />
				<path d='M755 478L787 490M755 478L735 880M765 880L745 1400L683 2245M745 1400L690 2240' />
				<path d='M755 550L795 585L813 660L752 560M765 540L800 620L813 685L740 725M570 570L625 745L598 620M625 605L655 735L755 690M463 677V705' />
				<path d='M700 985L695 1300L735 1440L722 1010M735 940L790 1070L765 1385M710 1000L740 1060L795 990L792 1040L770 1075L750 1375' />
				<path d='M680 1350L735 1330L765 1385L765 1460M680 1350L710 1440L765 1410M690 1170L735 1270L710 1350M700 1380L670 2080L663 2175' />
				<path d='M138 1515L180 1560L172 1618L136 1570ZM125 1680L155 1672L183 1730L155 1738Z' />
				<path d='M120 1990L205 1957M150 2060L218 2010M105 2000L130 1995L157 2050L130 2058ZM105 2062L128 2115L155 2105' />
				<path d='M115 2372L360 2275L372 2310L470 2280V2308L370 2350M115 2402L355 2332M500 2265L660 2195V2230L510 2292L500 2265L550 2388L710 2315L663 2175L115 2375' />
				<path d='M115 2430L155 2450M115 2430L350 2340M115 2372L205 2410M120 2440L180 2555L522 2400L470 2280M150 2300L218 2465L522 2370' />
				<path d='M118 2320L152 2315L160 2355H310L1300 1925M215 2558L1355 2060' />
				<path d='M60 2482L92 2470L106 2525L215 2480M120 2620C150 2650 190 2660 240 2650L1365 2130M120 2720C150 2760 200 2765 250 2755L1365 2270M125 2700C150 2730 200 2735 240 2720L1355 2240' />
				<path d='M155 2640C145 2720 170 2750 210 2748L1300 2265M160 2635H215L250 2710L1340 2245M300 2638L305 2690M570 2520L582 2560M720 2340L715 2510' />
				<path d='M1098 1373L1270 1295L1240 1775L1070 1848L1080 1690C1100 1660 1108 1620 1085 1600ZM1098 1385L1270 1307' />
				<path d='M775 2227L948 2150L998 2235V2262L822 2343L775 2255ZM775 2227L822 2315L998 2235M822 2315V2343M948 2150V2178' />
				<path d='M1340 1460L1400 1438L1412 1495L1325 1520M1385 1740C1400 1800 1400 1860 1340 1920M1308 2095L1370 2070L1345 2240M1372 2140L1352 2245' />
			</g>
			<ellipse cx='1405' cy='1465' rx='5' ry='25' fill='#a9adb5' stroke='#00a5a0' />

			<Boss />
			<g transform='translate(-58 920)'>
				<Boss />
			</g>

			{/* splitting quilt */}
			<path d='M978 43L838 2237L1103 2695L1188 1380L1240 500Z' fill='none' stroke='#754e57' />
			<path
				d='M1008 78L1113 258L1065 275L1065 310L1080 330L1080 365C1120 430 1137 480 1135 540L1080 1440L1020 2365L1035 2430L1122 2400L1103 2660L1090 2665L862 2250Z'
				fill='#004a00'
			/>
			<path d='M1112 430C1130 470 1137 500 1135 540L1080 1440L1020 2365L975 2290L1025 1400L1092 420Z' fill='#0c4a0a' />
			<path d='M992 82L1010 78L925 1380L872 2245L855 2250L907 1380Z' fill='#00a500' stroke='#00c400' />
			<path d='M1008 78L1245 488L1187 1380L1105 2660H1090L855 2250' fill='none' stroke='#00c400' />
			<path d='M1000 88L1230 495L1172 1400L1095 2650L868 2245M1230 495L1245 488' fill='none' stroke='#00c400' />
			<path d='M978 43L1240 500L1185 1400' fill='none' stroke='#754e57' />
			<g fill='none' stroke='#00a5a0'>
				<path d='M980 375L1080 330M968 480L1120 415M960 610L1130 535M955 720L1125 645M862 2110L1040 2040M885 2345L1025 2290M940 2410L1020 2375M970 2465L1120 2400' />
				<path d='M870 2185L948 2150L998 2235V2262L895 2310M948 2150V2178L998 2262' />
			</g>

			<path d='M1045 1373L1180 1300L1177 1283L1233 1288L1190 1335L1186 1320Z' fill='#b63fd6' />

			{/* coordinate systems */}
			<path d='M775 320L780 225M802 1475L805 1410' stroke='#30f5ff' />
			<path d='M771 275L780 225L784 275Z' fill='#30f5ff' />
			<path d='M775 320L680 358M802 1475L735 1505' stroke='#2cf52c' />
			<path d='M680 358L718 336L716 352Z' fill='#2cf52c' />
			<path d='M775 320L822 405M802 1475L837 1537' stroke='#fa2d2d' />
			<path d='M797 368L809 360L822 405Z' fill='#fa2d2d' />
			<ellipse cx='806' cy='1408' rx='4' ry='6' fill='#30f5ff' />
			<ellipse cx='736' cy='1504' rx='5' ry='6' fill='#2cf52c' />
			<ellipse cx='837' cy='1537' rx='6' ry='7' fill='#fa2d2d' />
		</svg>
	);
}

/* ---------- page ---------- */

const menus = ['模型', '分析', '实时仿真', '注释', '工具', '视图', '柔性建模', '应用程序'];

const caretRight = <Triangle d='M3 1v12l10-6z' />;
const caretDown = <Triangle d='M0 2h13L6 13z' />;

function ModelTree() {
	return (
		<Sidebar>
			<PaneTabs>
				<PaneTab aria-label='文件夹浏览器'>
					<FoldersIcon />
				</PaneTab>
				<PaneTab aria-label='收藏夹'>
					<FavoriteIcon />
				</PaneTab>
			</PaneTabs>
			<TreeTools>
				<ToolStub>
					<DotsIcon />
				</ToolStub>
				<ToolButton aria-label='全部展开'>
					<ExpandIcon />
				</ToolButton>
				<ToolButton aria-label='全部折叠'>
					<CollapseIcon />
				</ToolButton>
				<ToolButton $on aria-label='显示列'>
					<ColumnsIcon />
				</ToolButton>
				<Divider $inset='0 7px' />
				<ToolButton aria-label='过滤器'>
					<FilterIcon />
				</ToolButton>
				<ToolButton aria-label='列设置'>
					<ColumnsIcon page />
				</ToolButton>
				<Divider $inset='0 7px' />
				<ToolButton aria-label='设计项'>
					<ListIcon />
				</ToolButton>
				<ToolButton aria-label='更多'>
					<Icon w={14} h={10}>
						<path d='M1 1l4 4-4 4M8 1l4 4-4 4' stroke='#444' strokeWidth='2' />
					</Icon>
				</ToolButton>
				<ToolButton aria-label='设置'>
					<SettingsIcon />
				</ToolButton>
			</TreeTools>
			<SearchRow>
				<SearchBox>
					<input aria-label='搜索' />
					<SmallButton $w={28} aria-label='清除'>
						<Icon w={12} h={12}>
							<path d='M1 1l10 10M11 1L1 11' stroke='#aaa' strokeWidth='2' />
						</Icon>
					</SmallButton>
				</SearchBox>
				<SmallButton $w={28} aria-label='搜索选项'>
					<Icon w={10} h={6}>
						<path d='M0 0h10L5 6z' fill='#555' />
					</Icon>
				</SmallButton>
				<SmallButton $w={34} aria-label='添加'>
					<Icon w={18} h={18}>
						<path d='M9 1v16M1 9h16' stroke='#a0a2a4' strokeWidth='5' />
					</Icon>
				</SmallButton>
			</SearchRow>
			<ColumnHead>
				<div />
				<FrameIcon />
			</ColumnHead>
			<Tree>
				<TreeList>
					<TreeRow>D107-XG_9.PRT</TreeRow>
					<TreeRow>
						<Icon w={22} box='2 0 22 24'>
							<ListIcon />
						</Icon>
						<TreeLabel>设计项</TreeLabel>
					</TreeRow>
					<TreeRow>
						<Toggle aria-label='展开'>{caretRight}</Toggle>
						<QuiltIcon />
						<TreeLabel $selected>面组 (1)</TreeLabel>
					</TreeRow>
					<TreeRow>
						<Toggle aria-label='折叠'>{caretDown}</Toggle>
						<BodiesIcon />
						<TreeLabel>主体 (1)</TreeLabel>
					</TreeRow>
					<TreeRow $indent={58}>
						<BodyIcon />
						<TreeLabel>主体 1</TreeLabel>
					</TreeRow>
					<TreeRow>
						<Toggle aria-label='展开'>{caretRight}</Toggle>
						<NoteIcon />
						<TreeLabel>注释</TreeLabel>
					</TreeRow>
					<TreeRow>
						<CsysIcon />
						<TreeLabel>D107-XG_9</TreeLabel>
					</TreeRow>
					<TreeRow>
						<ImportIcon />
						<TreeLabel>导入特征 标识4</TreeLabel>
					</TreeRow>
					<TreeRow>
						<PlaneIcon />
						<TreeLabel>DTM2</TreeLabel>
					</TreeRow>
					<TreeRow>
						<PlaneIcon />
						<TreeLabel>DTM3</TreeLabel>
					</TreeRow>
					<TreeRow>
						<ExtrudeIcon />
						<TreeLabel>拉伸 1</TreeLabel>
					</TreeRow>
					<InsertHere />
					<TreeRow>
						<HalfSplitIcon />
						<Icon w={6}>{null}</Icon>
						<PendingIcon />
						<TreeLabel $tight>分割主体 1</TreeLabel>
					</TreeRow>
				</TreeList>
			</Tree>
			<ScrollBar>
				<ScrollButton $w={22} aria-label='向右滚动'>
					<Triangle w={6} h={10} d='M0 0v10l6-5z' />
				</ScrollButton>
				<ScrollButton $w={10} aria-label='上一列'>
					<Triangle w={6} h={10} d='M6 0v10L0 5z' />
				</ScrollButton>
				<ScrollButton $w={10} aria-label='下一列'>
					<Triangle w={6} h={10} d='M0 0v10l6-5z' />
				</ScrollButton>
			</ScrollBar>
		</Sidebar>
	);
}

function SplitBodyRibbon() {
	return (
		<Ribbon>
			<RibbonStub>
				<Icon w={18} h={40}>
					<path d='M-4 3h15l6-2v32l-5 6H-4z' fill='#74b6d0' stroke='#1d6f93' strokeWidth='1.5' />
					<path d='M-4 4h16l-2 4H-4z' fill='#b5ecfa' />
					<path d='M-4 8h14v29H-4z' fill='#fff' />
				</Icon>
			</RibbonStub>
			<Divider />
			<Dashboard>
				<Groups>
					<Group $left={19} $right={29}>
						<GroupTitle>分割依据</GroupTitle>
						<Choices>
							<Choice $on>
								<SplitIcon />
								分割对象
							</Choice>
							<Choice>
								<VolumeIcon />
								体积块
							</Choice>
						</Choices>
					</Group>
					<Divider $soft $inset='7px 0 6px' />
					<Group $left={14} $right={39}>
						<GroupTitle>参考</GroupTitle>
						<Fields>
							<label htmlFor='body'>要分割的主体:</label>
							<Collector id='body' readOnly value='1个项' />
							<label htmlFor='tool'>分割对象:</label>
							<Collector id='tool' $green readOnly value='1个项' />
						</Fields>
					</Group>
					<Group $left={0} $right={25}>
						<GroupTitle>选项</GroupTitle>
						<Options>
							<OptionButton>
								<FlipIcon />
								反向分割侧
							</OptionButton>
							<OptionButton disabled>
								<ExtendIcon />
								延伸分割对象
							</OptionButton>
						</Options>
					</Group>
					<Divider />
					<Playback>
						<PlayButton $w={46} aria-label='暂停'>
							<Icon w={34} h={32}>
								<path d='M0 0h13v32H0zM21 0h13v32H21z' fill='#3c3c3c' />
							</Icon>
						</PlayButton>
						<PlayButton $w={44} aria-label='无预览'>
							<Icon w={19} h={19}>
								<circle cx='9.5' cy='9.5' r='7.5' stroke='#666' strokeWidth='2.5' />
								<path d='M4 4l11 11' stroke='#666' strokeWidth='2.5' />
							</Icon>
						</PlayButton>
						<PlayButton $w={26} aria-label='分离'>
							<WireIcon />
						</PlayButton>
						<PlayButton $w={42} $on aria-label='连接'>
							<SolidIcon />
						</PlayButton>
						<PlayButton $w={54} aria-label='特征预览'>
							<GlassesIcon />
						</PlayButton>
					</Playback>
					<Divider />
					<Finish>
						<FinishButton>
							<CheckIcon />
							确定
						</FinishButton>
						<FinishButton>
							<CrossIcon />
							取消
						</FinishButton>
					</Finish>
				</Groups>
				<SubTabs>
					<SubTab $on>参考</SubTab>
					<SubTab>属性</SubTab>
				</SubTabs>
			</Dashboard>
			<Divider />
			<Help>
				<p>通过分割对象或体积块将一个主体分成两个主体。</p>
				<a href='#more'>阅读更多...</a>
			</Help>
		</Ribbon>
	);
}

function App() {
	return (
		<Page>
			<GlobalStyle />
			<MenuBar>
				<MenuTab $file>文件</MenuTab>
				{menus.map((name) => (
					<MenuTab key={name}>{name}</MenuTab>
				))}
				<MenuTab $active>分割主体</MenuTab>
			</MenuBar>
			<SplitBodyRibbon />
			<Workspace>
				<ModelTree />
				<Viewport>
					<Scene>
						<Model />
						<text x='939' y='237' fill='#754e57'>
							D107-XG_9
						</text>
						<text x='1025' y='207' fill='#30e8f5'>
							Z
						</text>
						<text x='969' y='268' fill='#2cf52c'>
							Y
						</text>
						<text x='1044' y='283' fill='#fa2d2d'>
							X
						</text>
					</Scene>
					<FloatPanel>
						<Grip>
							<i />
							<i />
							<i />
							<i />
						</Grip>
						<FieldLabel htmlFor='panelBody'>要分割的主体</FieldLabel>
						<Collector id='panelBody' $h={32} readOnly value='主体 1' />
						<FieldLabel htmlFor='panelTool'>分割对象</FieldLabel>
						<Collector id='panelTool' $h={32} $green readOnly value='面组2:F5(拉伸_1)' />
					</FloatPanel>
					<ViewTools>
						{viewIcons.map(({name, on, icon}) => (
							<ToolButton key={name} $on={on} aria-label={name}>
								{icon}
							</ToolButton>
						))}
					</ViewTools>
					<Brand>
						<p>
							<span>野火</span>论坛
						</p>
						<small>www.proewildfire.cn</small>
						<Icon w={20} h={42}>
							<path d='M5 0c14 10 18 26 12 34-3 4-5 6-8 8-4 0-8-4-8-8 6-4 8-12 1-24 6 4 8 8 9 14C13 16 11 8 5 0z' fill='#ff6634' />
						</Icon>
					</Brand>
				</Viewport>
			</Workspace>
			<StatusLine />
		</Page>
	);
}

export default App;
